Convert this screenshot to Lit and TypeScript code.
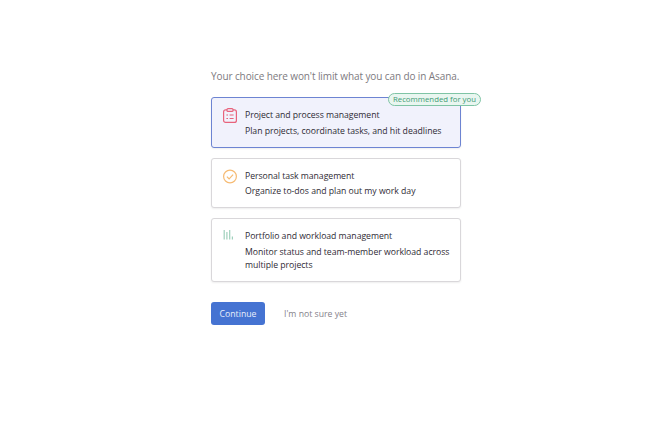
import { LitElement, html, css } from "lit";
import { customElement } from "lit/decorators.js";

@customElement("app-root")
export class AppRoot extends LitElement {
  protected render() {
    return html`
      <main class="page">
        <p class="lead">Your choice here won't limit what you can do in Asana.</p>
        <div class="cards">
          <div class="card selected">
            <span class="badge">Recommended for you</span>
            <svg class="icon" viewBox="0 0 14 15" fill="none" stroke="#e8637c" stroke-width="1.2">
              <rect x="0.6" y="1.9" width="12.8" height="12.5" rx="2" />
              <rect x="4" y="0.6" width="6" height="2.8" rx="1" fill="#f1f2fc" />
              <path d="M3.4 7h1.6M6.6 7h4M3.4 10.5h1.6M6.6 10.5h4" />
            </svg>
            <div class="text">
              <div class="title">Project and process management</div>
              <div class="desc">Plan projects, coordinate tasks, and hit deadlines</div>
            </div>
          </div>
          <div class="card">
            <svg class="icon" viewBox="0 0 14 15" fill="none" stroke="#f6bb74" stroke-width="1.2">
              <circle cx="7" cy="7.5" r="6.4" />
              <path d="M3.9 7.7l2.2 2.2 4-4.2" />
            </svg>
            <div class="text">
              <div class="title">Personal task management</div>
              <div class="desc">Organize to-dos and plan out my work day</div>
            </div>
          </div>
          <div class="card">
            <svg class="icon" viewBox="0 0 14 15" fill="none" stroke="#9fd0bc" stroke-width="1.2">
              <path d="M1.2 1v9.5M3.9 3v7.5M6.7 1v9.5M9.4 7.5v3" />
            </svg>
            <div class="text">
              <div class="title">Portfolio and workload management</div>
              <div class="desc">Monitor status and team-member workload across multiple projects</div>
            </div>
          </div>
        </div>
        <div class="actions">
          <button class="continue">Continue</button>
          <button class="skip">I'm not sure yet</button>
        </div>
      </main>
    `;
  }

  static styles = css`
    :host {
      display: block;
      font-family: "Open Sans", "Noto Sans", sans-serif;
      color: #2f2b35;
    }

    .page {
      width: 250px;
      margin-left: 211px;
      padding-top: 68px;
    }

    .lead {
      margin: 0 0 13px;
      font-size: 10px;
      letter-spacing: -0.1px;
      line-height: 16px;
      color: #7d7a80;
      white-space: nowrap;
    }

    .cards {
      display: flex;
      flex-direction: column;
      gap: 10px;
    }

    .card {
      position: relative;
      display: flex;
      gap: 8px;
      padding: 10px 8px 8.5px 11px;
      border: 1px solid #d9d7da;
      border-radius: 3px;
      box-shadow: 0 1px 2px rgba(0, 0, 0, 0.07);
      background: #fff;
    }

    .card.selected {
      background: #f1f2fc;
      border-color: #6d84d2;
    }

    .badge {
      position: absolute;
      top: -5px;
      right: -21px;
      height: 11px;
      padding: 0 4px;
      border: 1px solid #7fc4a5;
      border-radius: 7px;
      background: #e9f6f0;
      color: #3f9a75;
      font-size: 7.8px;
      line-height: 11px;
      white-space: nowrap;
    }

    .icon {
      flex: none;
      width: 14px;
      height: 15px;
    }

    .title {
      font-size: 8.7px;
      letter-spacing: -0.05px;
      line-height: 15px;
      font-weight: 500;
      margin-bottom: 1.5px;
    }

    .desc {
      font-size: 8.7px;
      letter-spacing: -0.03px;
      line-height: 13.5px;
    }

    .actions {
      display: flex;
      align-items: center;
      gap: 19px;
      margin-top: 20px;
    }

    button {
      font: inherit;
      font-size: 8.7px;
      border: none;
      background: none;
      padding: 0;
    }

    .continue {
      width: 54px;
      height: 23px;
      border-radius: 3px;
      background: #4573d2;
      color: #e8eefb;
    }

    .skip {
      color: #85828a;
    }
  `;
}

declare global {
  interface HTMLElementTagNameMap {
    "app-root": AppRoot;
  }
}
